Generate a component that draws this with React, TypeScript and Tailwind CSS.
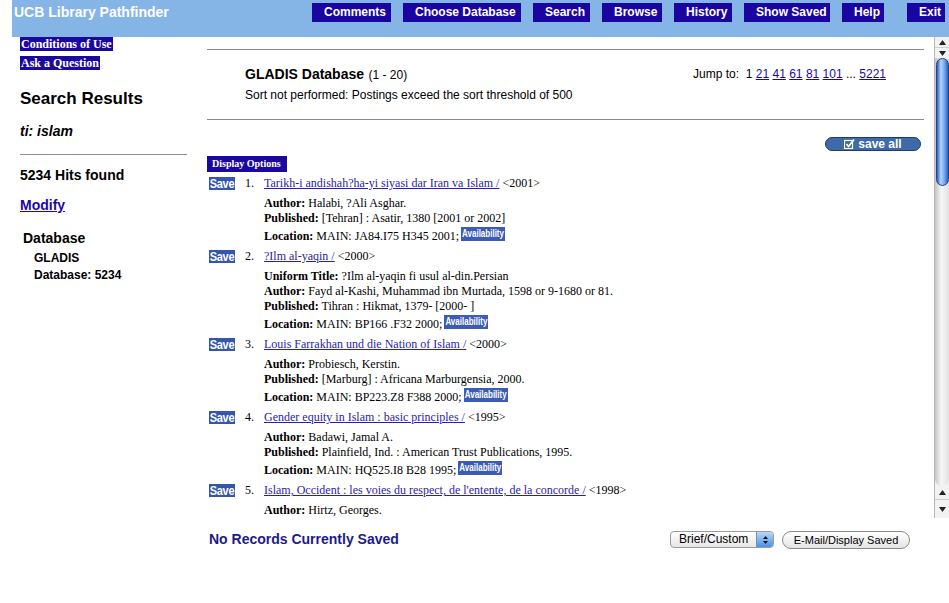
import React from 'react';

type Rec = {
  n: number;
  title: string;
  year: string;
  lines: [string, string][];
  location?: string;
};

const RECORDS: Rec[] = [
  {
    n: 1,
    title: 'Tarikh-i andishah?ha-yi siyasi dar Iran va Islam /',
    year: '<2001>',
    lines: [
      ['Author:', 'Halabi, ?Ali Asghar.'],
      ['Published:', '[Tehran] : Asatir, 1380 [2001 or 2002]'],
    ],
    location: 'MAIN: JA84.I75 H345 2001;',
  },
  {
    n: 2,
    title: '?Ilm al-yaqin /',
    year: '<2000>',
    lines: [
      ['Uniform Title:', '?Ilm al-yaqin fi usul al-din.Persian'],
      ['Author:', 'Fayd al-Kashi, Muhammad ibn Murtada, 1598 or 9-1680 or 81.'],
      ['Published:', 'Tihran : Hikmat, 1379- [2000- ]'],
    ],
    location: 'MAIN: BP166 .F32 2000;',
  },
  {
    n: 3,
    title: 'Louis Farrakhan und die Nation of Islam /',
    year: '<2000>',
    lines: [
      ['Author:', 'Probiesch, Kerstin.'],
      ['Published:', '[Marburg] : Africana Marburgensia, 2000.'],
    ],
    location: 'MAIN: BP223.Z8 F388 2000;',
  },
  {
    n: 4,
    title: 'Gender equity in Islam : basic principles /',
    year: '<1995>',
    lines: [
      ['Author:', 'Badawi, Jamal A.'],
      ['Published:', 'Plainfield, Ind. : American Trust Publications, 1995.'],
    ],
    location: 'MAIN: HQ525.I8 B28 1995;',
  },
  {
    n: 5,
    title: "Islam, Occident : les voies du respect, de l'entente, de la concorde /",
    year: '<1998>',
    lines: [['Author:', 'Hirtz, Georges.']],
  },
];

const NAV = [
  { label: 'Comments', cls: 'w-[79px]' },
  { label: 'Choose Database', cls: 'w-[118px] ml-[12px]' },
  { label: 'Search', cls: 'w-[57px] ml-[12px]' },
  { label: 'Browse', cls: 'w-[60px] ml-[12px]' },
  { label: 'History', cls: 'w-[58px] ml-[12px]' },
  { label: 'Show Saved', cls: 'w-[86px] ml-[12px]' },
  { label: 'Help', cls: 'w-[42px] ml-[12px]' },
  { label: 'Exit', cls: 'w-[38px] ml-[23px]' },
];

function Arrow({ up }: { up?: boolean }) {
  return (
    <svg width="7" height="5" viewBox="0 0 7 5">
      <path d={up ? 'M3.5 0L7 5H0z' : 'M0 0h7L3.5 5z'} fill="#222" />
    </svg>
  );
}

function Scrollbar() {
  return (
    <div className="flex h-[481px] w-[15px] flex-col border-l border-[#b8b8b8] bg-[#f2f2f2]">
      <div className="flex h-[11px] items-center justify-center border-b border-[#cfcfcf]"><Arrow up /></div>
      <div className="flex h-[10px] items-center justify-center"><Arrow /></div>
      <div className="flex flex-1 flex-col rounded-b-full bg-[linear-gradient(to_right,#c4c4c4,#f6f6f6_45%,#e2e2e2)]">
        <div className="mx-auto h-[128px] w-[13px] rounded-full border border-[#1f3f8f] bg-[linear-gradient(to_right,#2a5cc4,#b4d4f8_35%,#78adf0_65%,#2b60c6)]" />
      </div>
      <div className="flex h-[14px] items-center justify-center border-b border-[#cfcfcf]"><Arrow up /></div>
      <div className="flex h-[18px] items-center justify-center"><Arrow /></div>
    </div>
  );
}

// narrow bold label: small text stretched upward, since no condensed face is installed
function Tag({ text, cls }: { text: string; cls: string }) {
  return (
    <span className={`flex items-center justify-center text-white ${cls}`}>
      <span className="inline-block whitespace-nowrap font-['Liberation_Sans',Arial,sans-serif] font-bold">{text}</span>
    </span>
  );
}

function Record({ rec }: { rec: Rec }) {
  return (
    <div className="pb-[1px] font-['Liberation_Serif',serif] text-[12px] text-black">
      <div className="flex h-[16px] items-center">
        <Tag text="Save" cls="ml-[2px] h-[13px] w-[26px] bg-[#3656ad] text-[11px] leading-[13px] [&>span]:scale-y-[1.15] [&>span]:tracking-[-0.3px]" />
        <span className="ml-[10px] w-[19px]">{rec.n}.</span>
        <span className="whitespace-nowrap">
          <a href="#" className="text-[#2a1ea8] underline">{rec.title}</a> {rec.year}
        </span>
      </div>
      <div className="mt-[5px] pl-[57px]">
        {rec.lines.map(([k, v]) => (
          <div key={k} className="whitespace-nowrap leading-[15px]">
            <b>{k}</b> {v}
          </div>
        ))}
        {rec.location && (
          <div className="flex h-[21px] items-start whitespace-nowrap">
            <span className="leading-[21px]"><b>Location:</b> {rec.location}</span>
            <Tag text="Availability" cls="ml-[2px] mt-[1px] h-[14px] w-[44px] bg-[#3a5bb6] text-[8px] leading-[14px] [&>span]:scale-y-[1.4]" />
          </div>
        )}
      </div>
    </div>
  );
}

export default function App() {
  return (
    <div className="h-[603px] w-[949px] overflow-hidden bg-white font-['Liberation_Sans',Arial,sans-serif] text-black">
      <header className="ml-[12px] flex h-[37px] items-start bg-[#85b4e6]">
        <div className="pl-[2px] pt-[4px] text-[14px] font-bold leading-[17px] text-white">UCB Library Pathfinder</div>
        <nav className="ml-auto flex pr-[4px] pt-[3px]">
          {NAV.map((b) => (
            <button key={b.label} className={`h-[19px] bg-[#1b05a0] pl-[12px] text-left text-[12px] font-bold leading-[19px] text-white ${b.cls}`}>
              {b.label}
            </button>
          ))}
        </nav>
      </header>

      <div className="flex h-[566px]">
        <aside className="w-[200px] shrink-0">
          <div className="ml-[20px] flex flex-col items-start font-['Liberation_Serif',serif] text-[12px] font-bold leading-[14px] text-white">
            <span className="bg-[#1b08a0] px-[1px]">Conditions of Use</span>
            <span className="mt-[5px] bg-[#1b08a0] px-[1px]">Ask a Question</span>
          </div>
          <h1 className="ml-[20px] mt-[19px] text-[17px] font-bold leading-[20px]">Search Results</h1>
          <p className="ml-[20px] mt-[14px] text-[14px] font-bold italic leading-[17px]">ti: islam</p>
          <div className="ml-[20px] mt-[14px] h-px w-[167px] bg-[#8e8e8e]" />
          <p className="ml-[20px] mt-[12px] text-[14px] font-bold leading-[17px]">5234 Hits found</p>
          <a href="#" className="ml-[20px] mt-[13px] block text-[14px] font-bold leading-[17px] text-[#1a0aa0] underline">Modify</a>
          <p className="ml-[23px] mt-[16px] text-[14px] font-bold leading-[17px]">Database</p>
          <div className="ml-[34px] mt-[3px] text-[12px] font-bold leading-[17px]">
            <div>GLADIS</div>
            <div>Database: 5234</div>
          </div>
        </aside>

        <div className="flex flex-1 flex-col">
          <div className="flex h-[481px]">
            <main className="flex-1 overflow-hidden pl-[7px] pr-[10px]">
              <div className="mt-[12px] h-px bg-[#8a8a8a]" />
              <div className="flex h-[69px] justify-between px-[38px] pt-[16px]">
                <div>
                  <div className="leading-[16px]">
                    <span className="text-[14px] font-bold">GLADIS Database</span> <span className="text-[12px]">(1 - 20)</span>
                  </div>
                  <div className="mt-[4px] text-[12px] leading-[16px]">Sort not performed: Postings exceed the sort threshold of 500</div>
                </div>
                <div className="whitespace-nowrap text-[12px] leading-[16px]">
                  Jump to:&nbsp; 1{' '}
                  {['21', '41', '61', '81', '101'].map((p) => (
                    <React.Fragment key={p}>
                      <a href="#" className="text-[#1a0aa0] underline">{p}</a>{' '}
                    </React.Fragment>
                  ))}
                  ... <a href="#" className="text-[#1a0aa0] underline">5221</a>
                </div>
              </div>
              <div className="h-px bg-[#8a8a8a]" />

              <div className="mt-[17px] flex justify-end pr-[3px]">
                <button className="flex h-[14px] w-[96px] items-center justify-center gap-[3px] rounded-full border border-[#1d3c6c] bg-[#3e6ba7] text-[12px] font-bold leading-[12px] text-white">
                  <svg width="11" height="11" viewBox="0 0 11 11">
                    <rect x="0.5" y="1.5" width="8" height="8" fill="none" stroke="#fff" strokeWidth="1.2" />
                    <path d="M2.5 5l2 2.5L10 0.5" fill="none" stroke="#fff" strokeWidth="1.6" />
                  </svg>
                  save all
                </button>
              </div>

              <div className="mt-[5px] h-[16px] w-[80px] bg-[#1b08a0] pl-[5px] font-['Liberation_Serif',serif] text-[10px] font-bold leading-[16px] text-white">
                Display Options
              </div>

              <div className="mt-[3px]">
                {RECORDS.map((r) => (
                  <Record key={r.n} rec={r} />
                ))}
              </div>
            </main>
            <Scrollbar />
          </div>

          <footer className="flex items-start pl-[9px] pr-[39px] pt-[13px]">
            <span className="text-[14px] font-bold leading-[17px] text-[#1c1a8c]">No Records Currently Saved</span>
            <div className="ml-auto flex h-[17px] w-[104px] overflow-hidden rounded-[4px] border border-[#9a9a9a] bg-[linear-gradient(#ffffff,#e6e6e6)] text-[12px] leading-[15px]">
              <span className="flex-1 pl-[8px]">Brief/Custom</span>
              <span className="flex w-[17px] flex-col items-center justify-center gap-[2px] border-l border-[#6a8fc0] bg-[linear-gradient(#b9d8f8,#4c90e6)]">
                <svg width="5" height="3" viewBox="0 0 5 3"><path d="M2.5 0L5 3H0z" fill="#111" /></svg>
                <svg width="5" height="3" viewBox="0 0 5 3"><path d="M0 0h5L2.5 3z" fill="#111" /></svg>
              </span>
            </div>
            <button className="ml-[8px] h-[18px] w-[128px] rounded-full border border-[#8a8a8a] bg-[linear-gradient(#ffffff,#e4e4e4)] text-[11px] leading-[16px] text-black">
              E-Mail/Display Saved
            </button>
          </footer>
        </div>
      </div>
    </div>
  );
}
